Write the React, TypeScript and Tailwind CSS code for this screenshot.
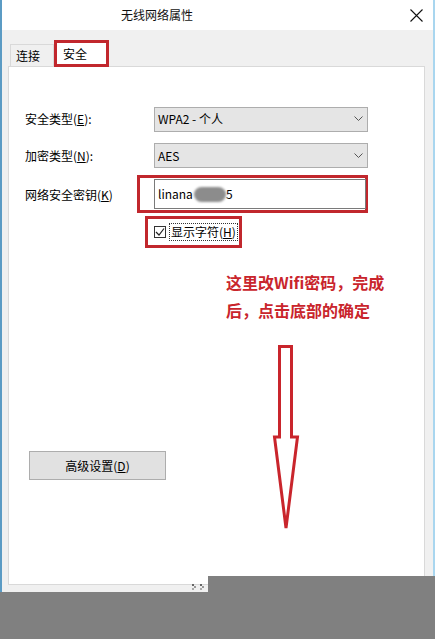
import React from 'react';

const RED = '#c1272d';

const Chevron: React.FC = () => (
  <svg width="9" height="6" viewBox="0 0 9 6" className="mr-[4px]">
    <path d="M0.5 0.5 L4.5 4.5 L8.5 0.5" fill="none" stroke="#555" strokeWidth="1" />
  </svg>
);

const Select: React.FC<{ value: string }> = ({ value }) => (
  <div className="w-[214px] h-[25px] bg-[#e5e5e5] border border-[#adadad] flex items-center justify-between pl-[3px] leading-[16px] text-[12px] -mt-[5px]">
    <span>{value}</span>
    <Chevron />
  </div>
);

const App: React.FC = () => {
  return (
    <div className="w-[435px] h-[639px] relative overflow-hidden bg-[#808080] text-black font-[family-name:'Noto_Sans_CJK_SC',sans-serif]">
      {/* window */}
      <div className="h-[592px] flex flex-col border-l-2 border-l-[#5b9bc4] border-r-2 border-r-[#a9d6ef]">
        {/* title bar */}
        <div className="h-[30px] bg-white flex items-center">
          <span className="ml-[119px] text-[12px] leading-[16px] text-[#111]">无线网络属性</span>
          <svg width="13" height="13" viewBox="0 0 13 13" className="ml-auto mr-[10px]">
            <path d="M0.5 0.5 L12.5 12.5 M12.5 0.5 L0.5 12.5" stroke="#111" strokeWidth="1.1" />
          </svg>
        </div>

        {/* body */}
        <div className="flex-1 bg-[#f0f0f0] pl-[6px] pr-[8px] pb-[7px] flex flex-col">
          {/* tabs */}
          <div className="h-[36px] flex items-end">
            <div className="ml-[2px] w-[44px] h-[22px] border border-b-0 border-[#d9d9d9] bg-[#f0f0f0] pl-[5px] pt-[3px] text-[12px] leading-[16px]">
              连接
            </div>
            <div className="relative z-10 -mb-[1px] w-[55px] h-[27px] border-[3px] border-[#c1272d] bg-white pl-[6px] pt-[3px] text-[12px] leading-[16px]">
              安全
            </div>
          </div>

          {/* panel */}
          <div className="flex-1 relative bg-white border border-[#d9d9d9] pl-[16px] pt-[39px] text-[12px] leading-[16px]">
            <div className="flex items-center h-[25px]">
              <span className="w-[129px]">
                安全类型(<span className="underline">E</span>):
              </span>
              <div className="mt-[6px]"><Select value="WPA2 - 个人" /></div>
            </div>

            <div className="flex items-center h-[25px] mt-[12px]">
              <span className="w-[129px]">
                加密类型(<span className="underline">N</span>):
              </span>
              <div className="mt-[5px]"><Select value="AES" /></div>
            </div>

            <div className="flex items-center mt-[7px]">
              <span className="w-[112px] mt-[1px]">
                网络安全密钥(<span className="underline">K</span>)
              </span>
              <div className="w-[231px] h-[38px] border-[3px] border-[#c1272d] pt-[1px] pl-[14px]">
                <div className="w-[212px] h-[30px] border border-[#7a7a7a] bg-white flex items-center pl-[3px]">
                  <span>linana</span>
                  <span className="inline-block w-[32px] h-[15px] rounded-full bg-[#8c8c8c] blur-[1px] ml-[1px]" />
                  <span>5</span>
                </div>
              </div>
            </div>

            <div className="mt-[3px] ml-[120px] w-[97px] h-[32px] border-[3px] border-[#c1272d] flex items-center pl-[6px]">
              <div className="w-[12px] h-[12px] border border-[#333] bg-white flex items-center justify-center">
                <svg width="10" height="10" viewBox="0 0 10 10">
                  <path d="M1 5 L4 8 L9 1.5" fill="none" stroke="#222" strokeWidth="1.2" />
                </svg>
              </div>
              <span className="ml-[3px] px-[1px] border border-dotted border-[#333]">
                显示字符(<span className="underline">H</span>)
              </span>
            </div>

            <button className="mt-[203px] ml-[4px] w-[137px] h-[29px] bg-[#e1e1e1] border border-[#adadad] flex items-center justify-center text-[12px] leading-[16px]">
              高级设置(<span className="underline">D</span>)
            </button>

            {/* annotation */}
            <div className="absolute left-[217px] top-[201px] text-[16px] leading-[28px] font-bold text-[#c9252c] whitespace-nowrap">
              <div>这里改Wifi密码，完成</div>
              <div>后，点击底部的确定</div>
            </div>
            <svg
              width="30"
              height="192"
              viewBox="0 0 30 192"
              className="absolute left-[262px] top-[276px]"
            >
              <path
                d="M8.5 3.5 L20.5 3.5 L20.5 94 L26.5 94 L15 185 L3.5 94 L8.5 94 Z"
                fill="white"
                stroke="#c9252c"
                strokeWidth="3"
                strokeLinejoin="miter"
              />
            </svg>
          </div>
        </div>
      </div>

      {/* size grip dots */}
      <svg width="14" height="8" viewBox="0 0 14 8" className="absolute left-[192px] top-[583px]">
        <rect x="0" y="1" width="2" height="2" fill="#666" />
        <rect x="2" y="3" width="2" height="2" fill="#999" />
        <rect x="0" y="5" width="2" height="2" fill="#aaa" />
        <rect x="8" y="1" width="2" height="2" fill="#666" />
        <rect x="10" y="3" width="2" height="2" fill="#999" />
        <rect x="8" y="5" width="2" height="2" fill="#aaa" />
      </svg>

      {/* grey cover over the lower right */}
      <div className="absolute left-[208px] top-[576px] right-0 h-[16px] bg-[#808080]" />
    </div>
  );
};

export default App;
